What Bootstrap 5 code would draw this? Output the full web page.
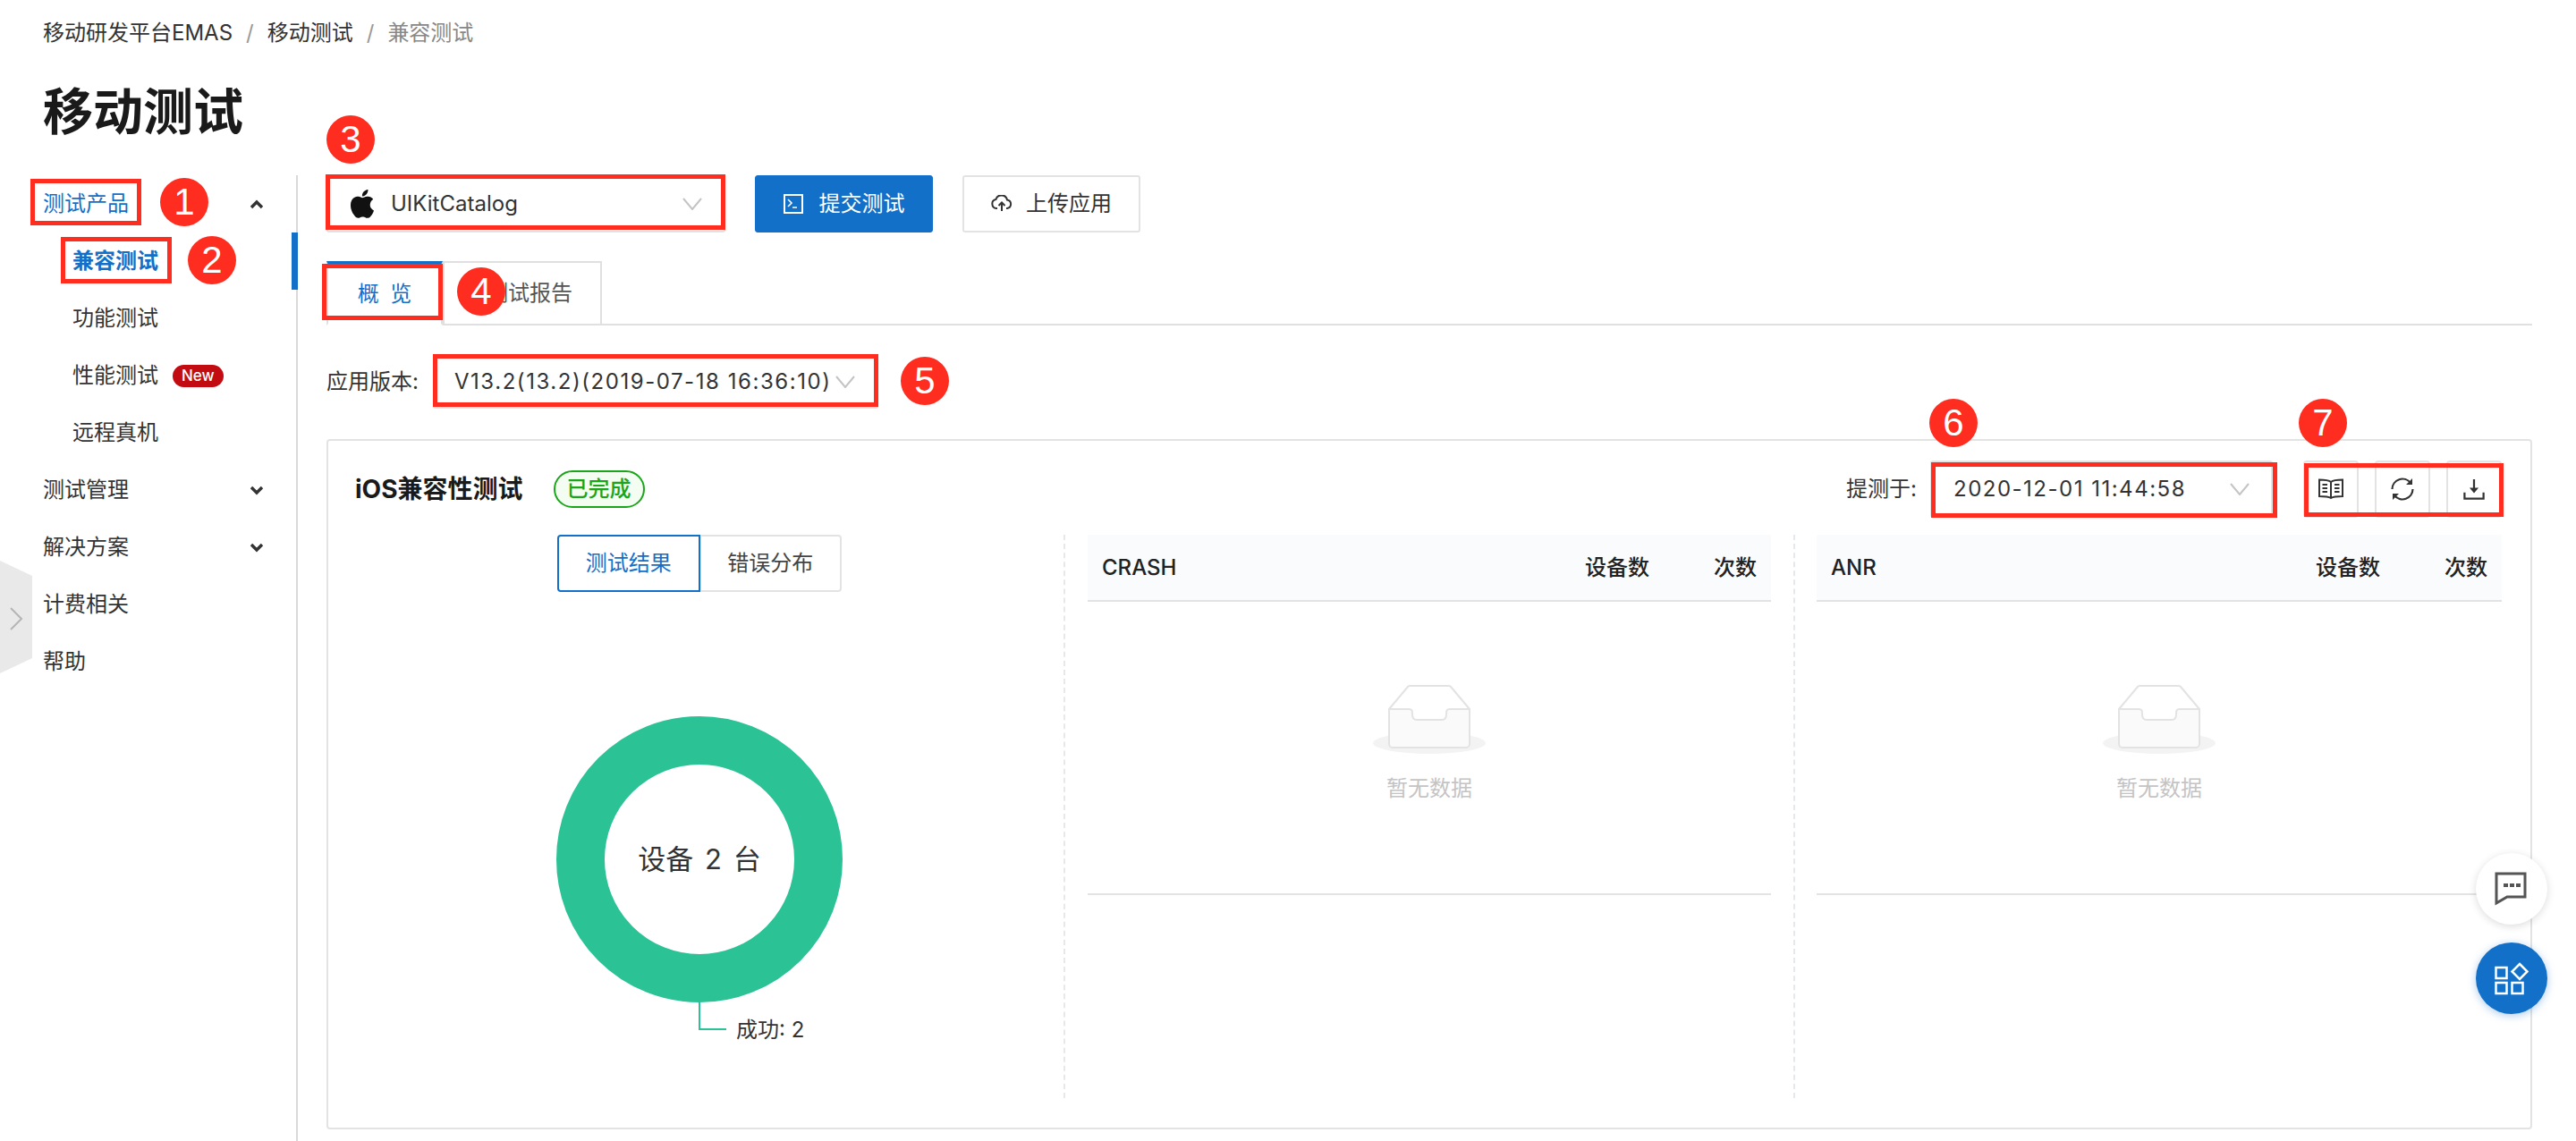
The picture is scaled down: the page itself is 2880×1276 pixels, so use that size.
<!DOCTYPE html>
<html lang="zh-CN">
<head>
<meta charset="utf-8">
<title>移动测试</title>
<link href="https://cdn.jsdelivr.net/npm/bootstrap@5.3.0/dist/css/bootstrap.min.css" rel="stylesheet">
<style>
html,body{margin:0;background:#fff}
body{font-family:Inter,"Noto Sans CJK SC","Liberation Sans",sans-serif;font-size:24px;color:#333;width:2880px;height:1276px;overflow:hidden}
.canvas{position:relative;width:2880px;height:1276px;overflow:hidden}
.crumbs{--bs-breadcrumb-margin-bottom:0;--bs-breadcrumb-divider-color:#999;--bs-breadcrumb-item-active-color:#888;--bs-breadcrumb-item-padding-x:15px;padding:20px 0 0 48px;height:54px;line-height:34px;font-size:24px}
.crumbs a{color:#333;text-decoration:none}
.page-title{font-size:56px;font-weight:700;color:#1a1a1a;line-height:72px;margin:35px 0 0 48px;height:107px}
.side{width:333px;flex:none;height:1080px;border-right:2px solid #d9d9d9;position:relative;list-style:none;margin:0;padding:0}
.side-item{height:64px;padding-left:48px;display:flex;align-items:center;justify-content:space-between;padding-right:36px;color:#333;font-size:24px}
.side-sub{padding-left:81px}
.side-on{color:#1370c9}
.side-sub.side-on{font-weight:700}
.side-item.side-cur{position:relative}
.side-item.side-cur::after{content:"";position:absolute;right:-2px;top:0;bottom:0;width:7px;background:#1370c9}
.new-tag{background:#c20c12;color:#fff;font-size:17px;font-weight:500;line-height:25px;height:25px;padding:0 10px;border-radius:13px;margin-left:16px}
.main-area{margin-left:32px;width:2466px;flex:none}
.picker{height:64px;border:2px solid #e3e3e3;border-radius:3px;background:#fff;display:flex;align-items:center;color:#333;font-size:24px}
.picker-app{width:446px;padding:0 24px 0 22px}
.picker-ver{width:498px;height:60px;padding:0 24px 0 22px;margin-left:16px;letter-spacing:1.55px}
.picker-date{width:383px;padding:0 24px;height:64px;margin-right:34px;letter-spacing:1.5px}
.caret-line{margin-left:auto;flex:none}
.tool-btn{height:64px;font-size:24px;border-radius:3px;display:flex;align-items:center;justify-content:center;gap:18px;padding:0}
.btn-go{width:199px;background:#1370c9;border-color:#1370c9;color:#fff;margin-left:33px}
.btn-up{width:199px;background:#fff;border:2px solid #e3e3e3;color:#333;margin-left:33px;gap:15px}
.tab-bar{--bs-nav-tabs-border-width:2px;--bs-nav-tabs-border-color:#e0e0e0;margin-top:32px;height:72px}
.tab-bar .nav-link{height:72px;border-radius:0;font-size:24px;color:#555;display:flex;align-items:center;padding:0;margin:0}
.tab-bar .nav-link.tab-a{width:130px;justify-content:center;word-spacing:6px;color:#1370c9;border-color:#1370c9 #e0e0e0 #fff;border-top-width:4px}
.tab-bar .tab-b{width:178px;padding-left:47px;border-color:#e0e0e0}
.ver-row{margin-top:32px;height:62px}
.panel{margin-top:33px;height:772px;border:2px solid #e3e3e3;border-radius:4px;padding:22px 32px 0 30px;position:relative}
.panel-title{font-size:28px;font-weight:700;color:#1a1a1a}
.ok-pill{height:42px;line-height:38px;border:2px solid #1aa51a;background:#f3fdf1;color:#1aa51a;font-size:24px;font-weight:500;border-radius:21px;padding:0 13px;margin-left:34px}
.submit-label{margin-right:15px}
.icon-row{gap:18px}
.icon-btn{width:62px;height:64px;border:2px solid #e3e3e3;border-radius:4px;background:#fff;padding:0;display:flex;align-items:center;justify-content:center}
.panel-cols{margin-top:19px}
.col-chart{width:794px;height:630px;border-right:2px dashed #e8e8e8;padding-right:22px;display:flex;flex-direction:column;align-items:center;flex:none}
.seg{width:318px}
.seg .btn{height:64px;width:159px;font-size:24px;border-radius:4px;padding:0;border:2px solid #e3e3e3;color:#444;background:#fff}
.seg .btn.seg-on{border-color:#1370c9;color:#1370c9;z-index:2}
.donut{margin-top:139px;display:block}
.donut text{font-family:Inter,"Noto Sans CJK SC",sans-serif;fill:#333}
.data-col{flex:none}
.data-a{width:789px;padding:0 0 0 25px}
.data-b{width:792px;height:630px;border-left:2px dashed #e4e9ef;padding-left:24px;margin-left:25px}
.data-tbl{--bs-table-border-color:#e3e3e3;margin:0;width:100%}
.data-tbl th{height:74px;background:#fafbfc;border-bottom-width:2px;font-weight:500;font-size:24px;color:#222;vertical-align:middle;padding:0 16px}
.data-tbl th.num-a{width:154px;text-align:right;padding-right:36px}
.data-tbl th.num-b{width:100px;text-align:right;padding-left:0}
.data-tbl td{height:328px;border-bottom-width:2px;padding:0;text-align:center;vertical-align:top}
.empty-pic{display:block;margin:93px auto 0}
.empty-txt{color:#c4c4c4;font-size:24px;line-height:30px;margin-top:23px}
.fold-tab{position:absolute;left:0;top:627px}
.fab{position:absolute;left:2768px;width:80px;height:80px;border-radius:50%;display:flex;align-items:center;justify-content:center}
.fab-a{top:954px;background:#fff;box-shadow:0 2px 10px rgba(0,0,0,.14)}
.fab-b{top:1054px;background:#1370c9;box-shadow:0 2px 10px rgba(19,112,201,.35)}
.mk-box{position:absolute;border:5px solid #ff2d20}
.mk-dot{position:absolute;width:54px;height:54px;border-radius:50%;background:#ff2d20;color:#fff;font-family:"Liberation Sans",Arial,sans-serif;font-size:42px;line-height:54px;text-align:center}
.b1{left:34px;top:200px;width:124px;height:52px}
.b2{left:68px;top:265px;width:124px;height:52px}
.b3{left:364px;top:195px;width:447px;height:62px}
.b4{left:360px;top:295px;width:135px;height:63px}
.b5{left:484px;top:396px;width:498px;height:59px}
.b6{left:2159px;top:517px;width:387px;height:62px}
.b7{left:2576px;top:518px;width:223px;height:60px}
.d1{left:179px;top:199px}
.d2{left:210px;top:264px}
.d3{left:365px;top:129px}
.d4{left:511px;top:299px}
.d5{left:1007px;top:399px}
.d6{left:2157px;top:446px}
.d7{left:2570px;top:446px}
</style>
</head>
<body>
<div class="canvas">
  <nav aria-label="breadcrumb">
    <ol class="breadcrumb crumbs">
      <li class="breadcrumb-item"><a href="#">移动研发平台EMAS</a></li>
      <li class="breadcrumb-item"><a href="#">移动测试</a></li>
      <li class="breadcrumb-item active" aria-current="page">兼容测试</li>
    </ol>
  </nav>
  <h1 class="page-title">移动测试</h1>
  <div class="d-flex">
    <ul class="side">
      <li class="side-item side-on">测试产品
        <svg width="16" height="11" viewBox="0 0 16 11"><path d="M2 9l6-6 6 6" fill="none" stroke="#333" stroke-width="3.400"/></svg></li>
      <li class="side-item side-sub side-on side-cur">兼容测试</li>
      <li class="side-item side-sub">功能测试</li>
      <li class="side-item side-sub justify-content-start">性能测试<span class="new-tag">New</span></li>
      <li class="side-item side-sub">远程真机</li>
      <li class="side-item">测试管理
        <svg width="16" height="11" viewBox="0 0 16 11"><path d="M2 2l6 6 6-6" fill="none" stroke="#333" stroke-width="3.400"/></svg></li>
      <li class="side-item">解决方案
        <svg width="16" height="11" viewBox="0 0 16 11"><path d="M2 2l6 6 6-6" fill="none" stroke="#333" stroke-width="3.400"/></svg></li>
      <li class="side-item">计费相关</li>
      <li class="side-item">帮助</li>
    </ul>
    <div class="main-area">
      <div class="d-flex align-items-center">
        <div class="picker picker-app">
          <svg width="32" height="32" viewBox="0 0 16 16" class="picker-logo me-3"><path fill="#111" d="M11.182.008C11.148-.03 9.923.023 8.857 1.18c-1.066 1.156-.902 2.482-.878 2.516.024.034 1.52.087 2.475-1.258.955-1.345.762-2.391.728-2.43Zm3.314 11.733c-.048-.096-2.325-1.234-2.113-3.422.212-2.189 1.675-2.789 1.698-2.854.023-.065-.597-.79-1.254-1.157a3.692 3.692 0 0 0-1.563-.434c-.108-.003-.483-.095-1.254.116-.508.139-1.653.589-1.968.607-.316.018-1.256-.522-2.267-.665-.647-.1-1.333.105-1.824.302-.49.197-1.422.759-2.074 2.234-.652 1.476-.311 3.813-.067 4.54.244.727.625 1.917 1.273 2.786.576.98 1.34 1.66 1.659 1.893.319.232 1.219.386 1.843.067.502-.308 1.408-.485 1.766-.472.357.013 1.061.154 1.782.539.571.197 1.111.115 1.652-.105.541-.221 1.324-1.059 2.238-2.758.347-.79.505-1.217.473-1.282Z"/></svg>
          <span>UIKitCatalog</span>
          <svg class="caret-line" width="22" height="14" viewBox="0 0 22 14"><path d="M1 1l10 12L21 1" fill="none" stroke="#c4c4c4" stroke-width="2"/></svg>
        </div>
        <button type="button" class="btn tool-btn btn-go">
          <svg width="22" height="22" viewBox="0 0 22 22"><rect x="1" y="1" width="20" height="20" fill="none" stroke="#fff" stroke-width="2"/><path d="M5 6l4 4-4 4M10 15h5" fill="none" stroke="#fff" stroke-width="1.600"/></svg>
          提交测试</button>
        <button type="button" class="btn tool-btn btn-up">
          <svg width="24" height="20" viewBox="0 0 24 20"><path d="M7 15H6a5 5 0 0 1-.6-9.900A6.500 6.500 0 0 1 18 5.500 4.800 4.800 0 0 1 18 15h-1M12 18V9M8.500 12L12 8.500 15.500 12" fill="none" stroke="#333" stroke-width="2"/></svg>
          上传应用</button>
      </div>
      <ul class="nav nav-tabs tab-bar">
        <li class="nav-item"><a class="nav-link active tab-a" href="#">概 览</a></li>
        <li class="nav-item"><a class="nav-link tab-b" href="#">测试报告</a></li>
      </ul>
      <div class="d-flex align-items-center ver-row">
        <span>应用版本:</span>
        <div class="picker picker-ver">
          <span>V13.2(13.2)(2019-07-18 16:36:10)</span>
          <svg class="caret-line" width="22" height="14" viewBox="0 0 22 14"><path d="M1 1l10 12L21 1" fill="none" stroke="#c4c4c4" stroke-width="2"/></svg>
        </div>
      </div>
      <section class="panel">
        <div class="d-flex align-items-center">
          <span class="panel-title">iOS兼容性测试</span>
          <span class="ok-pill">已完成</span>
          <span class="ms-auto submit-label">提测于:</span>
          <div class="picker picker-date">
            <span>2020-12-01 11:44:58</span>
            <svg class="caret-line" width="22" height="14" viewBox="0 0 22 14"><path d="M1 1l10 12L21 1" fill="none" stroke="#c4c4c4" stroke-width="2"/></svg>
          </div>
          <div class="d-flex icon-row">
            <button type="button" class="icon-btn" aria-label="说明"><svg width="30" height="24" viewBox="0 0 30 24"><path d="M15 4C12 1.500 7 1.500 2 1.500V20c5 0 10 0 13 2 3-2 8-2 13-2V1.500C23 1.500 18 1.500 15 4ZM15 4v18M5.500 7H11M5.500 11H11M5.500 15H11M19 7h5.500M19 11h5.500M19 15h5.500" fill="none" stroke="#333" stroke-width="2"/></svg></button>
            <button type="button" class="icon-btn" aria-label="刷新"><svg width="28" height="28" viewBox="0 0 28 28"><path d="M2.500 14A11.500 11.500 0 0 1 23 7M25.500 14A11.500 11.500 0 0 1 5 21" fill="none" stroke="#333" stroke-width="2.200"/><path d="M25 2v7h-7zM3 26v-7h7z" fill="#333"/></svg></button>
            <button type="button" class="icon-btn" aria-label="下载"><svg width="24" height="24" viewBox="0 0 26 26"><path d="M1.500 17v7.500h23V17M13 1v15" fill="none" stroke="#333" stroke-width="2.400"/><path d="M7.500 11.500h11L13 18z" fill="#333"/></svg></button>
          </div>
        </div>
        <div class="d-flex panel-cols">
          <div class="col-chart">
            <div class="btn-group seg" role="group">
              <button type="button" class="btn seg-on">测试结果</button>
              <button type="button" class="btn">错误分布</button>
            </div>
            <svg class="donut" width="320" height="370" viewBox="0 0 320 370">
              <circle cx="160" cy="160" r="133" fill="none" stroke="#2bc396" stroke-width="54"/>
              <path d="M160 320v30h30" fill="none" stroke="#2bc396" stroke-width="2"/>
              <text x="160" y="171" text-anchor="middle" font-size="31" word-spacing="4">设备 2 台</text>
              <text x="201" y="359" font-size="24">成功: 2</text>
            </svg>
          </div>
          <div class="data-col data-a">
            <table class="table data-tbl">
              <thead><tr><th>CRASH</th><th class="num-a">设备数</th><th class="num-b">次数</th></tr></thead>
              <tbody><tr><td colspan="3">
                <svg class="empty-pic" width="128" height="78" viewBox="0 0 128 78"><ellipse cx="64" cy="65" rx="63" ry="12" fill="#f3f3f3"/><path d="M19 27L40 2a3 3 0 0 1 2-1h44a3 3 0 0 1 2 1l21 25" fill="none" stroke="#e3e3e3" stroke-width="2"/><path d="M19 27h22c4 0 4 2 4 6 0 4 2 6 5 6h28c3 0 5-2 5-6 0-4 0-6 4-6h22v39a4 4 0 0 1-4 4H23a4 4 0 0 1-4-4Z" fill="#fafafa" stroke="#e3e3e3" stroke-width="2"/></svg>
                <div class="empty-txt">暂无数据</div>
              </td></tr></tbody>
            </table>
          </div>
          <div class="data-col data-b">
            <table class="table data-tbl">
              <thead><tr><th>ANR</th><th class="num-a">设备数</th><th class="num-b">次数</th></tr></thead>
              <tbody><tr><td colspan="3">
                <svg class="empty-pic" width="128" height="78" viewBox="0 0 128 78"><ellipse cx="64" cy="65" rx="63" ry="12" fill="#f3f3f3"/><path d="M19 27L40 2a3 3 0 0 1 2-1h44a3 3 0 0 1 2 1l21 25" fill="none" stroke="#e3e3e3" stroke-width="2"/><path d="M19 27h22c4 0 4 2 4 6 0 4 2 6 5 6h28c3 0 5-2 5-6 0-4 0-6 4-6h22v39a4 4 0 0 1-4 4H23a4 4 0 0 1-4-4Z" fill="#fafafa" stroke="#e3e3e3" stroke-width="2"/></svg>
                <div class="empty-txt">暂无数据</div>
              </td></tr></tbody>
            </table>
          </div>
        </div>
      </section>
    </div>
  </div>

  <svg class="fold-tab" width="36" height="126" viewBox="0 0 36 126"><path d="M0 0l36 17v92L0 126Z" fill="#e9e9e9"/><path d="M12 53l12 12-12 12" fill="none" stroke="#b5b5b5" stroke-width="2"/></svg>

  <div class="fab fab-a"><svg width="38" height="38" viewBox="0 0 38 38"><path d="M2 2h32v26H14L2 35Z" fill="none" stroke="#555" stroke-width="3"/><rect x="10" y="13" width="5" height="4" fill="#555"/><rect x="17" y="13" width="5" height="4" fill="#555"/><rect x="24" y="13" width="5" height="4" fill="#555"/></svg></div>
  <div class="fab fab-b"><svg width="38" height="38" viewBox="0 0 38 38"><g fill="none" stroke="#fff" stroke-width="2.500"><rect x="1.500" y="7" width="12" height="12"/><rect x="1.500" y="24" width="12" height="12"/><rect x="19.500" y="24" width="12" height="12"/><path d="M28 3l8.500 8.500L28 20l-8.500-8.500Z"/></g></svg></div>

  <div class="mk-box b1"></div><div class="mk-box b2"></div><div class="mk-box b3"></div><div class="mk-box b4"></div><div class="mk-box b5"></div><div class="mk-box b6"></div><div class="mk-box b7"></div>
  <div class="mk-dot d1">1</div><div class="mk-dot d2">2</div><div class="mk-dot d3">3</div><div class="mk-dot d4">4</div><div class="mk-dot d5">5</div><div class="mk-dot d6">6</div><div class="mk-dot d7">7</div>
</div>
<script src="https://cdn.jsdelivr.net/npm/bootstrap@5.3.0/dist/js/bootstrap.bundle.min.js"></script>
</body>
</html>
